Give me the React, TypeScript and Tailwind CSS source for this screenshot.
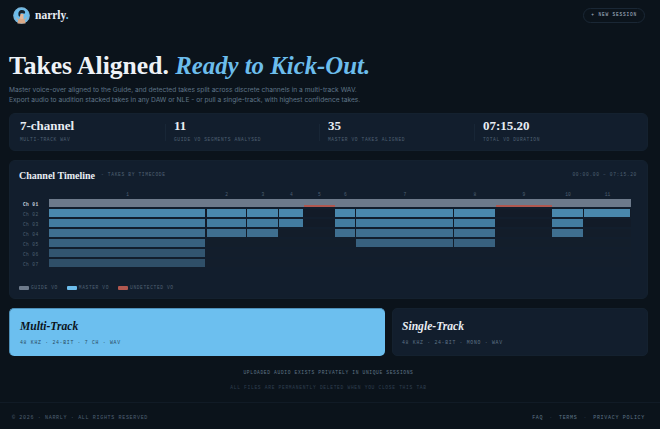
const serif = "font-['Liberation_Serif',serif]"
const mono = "font-['Liberation_Mono',monospace]"

const stats = [
  { value: '7-channel', label: 'MULTI-TRACK WAV' },
  { value: '11', label: 'GUIDE VO SEGMENTS ANALYSED' },
  { value: '35', label: 'MASTER VO TAKES ALIGNED' },
  { value: '07:15.20', label: 'TOTAL VO DURATION' },
]

// segment index 0-10, segments 4 and 8 are the undetected ones
const tracks = [
  { name: 'Ch 02', color: 'bg-[#4a88ad]', row: 'bg-[#121b28]', segs: [0, 1, 2, 3, 5, 6, 7, 9, 10] },
  { name: 'Ch 03', color: 'bg-[#437ca0]', row: 'bg-[#121b28]', segs: [0, 1, 2, 3, 5, 6, 7, 9] },
  { name: 'Ch 04', color: 'bg-[#3f6f90]', row: 'bg-[#131d2a]', segs: [0, 1, 2, 5, 6, 7, 9] },
  { name: 'Ch 05', color: 'bg-[#38617f]', row: 'bg-[#131e2b]', segs: [0, 6, 7] },
  { name: 'Ch 06', color: 'bg-[#325570]', row: 'bg-[#131e2c]', segs: [0] },
  { name: 'Ch 07', color: 'bg-[#2f4f68]', row: 'bg-[#131e2c]', segs: [0] },
]

const cols = 'grid grid-cols-[157.5px_40.5px_32px_25px_31px_21px_98px_42px_56px_32px_1fr]'
const numbers = ['1', '2', '3', '4', '5', '6', '7', '8', '9', '10', '11']

function Logo() {
  return (
    <svg width="17" height="17" viewBox="0 0 34 34" className="shrink-0">
      <circle cx="17" cy="17" r="16.5" fill="#6cbdec" />
      <circle cx="17" cy="17" r="15.5" fill="none" stroke="#8fa3b5" strokeWidth="1" />
      <path d="M9 33c0-7 3-11 8-11s8 4 8 11z" fill="#d9a988" />
      <path d="M14 14h7v9c-1 2-5 2-7 0z" fill="#e3b596" />
      <path d="M11 16c-1-6 2-10 7-10s7 3 6 7l-3 0c-2-1-5-1-6 0l-1 6c-2 0-3-1-3-3z" fill="#14202c" />
      <path d="M7 21l4 6M27 21l-4 6" stroke="#d9a988" strokeWidth="2" />
    </svg>
  )
}

function LegendItem({ color, label }: { color: string; label: string }) {
  return (
    <div className="flex items-center gap-[2px]">
      <div className={`w-[10px] h-[4px] rounded-[1px] ${color}`} />
      <span className={`${mono} text-[4.6px] tracking-[0.13em] text-[#4f6073]`}>{label}</span>
    </div>
  )
}

export default function App() {
  return (
    <div className="w-[660px] h-[429px] overflow-hidden bg-[#0b131b] text-white flex flex-col font-['Inter',sans-serif]">
      <header className="h-[31px] pl-[13px] pr-[15px] flex items-center justify-between shrink-0">
        <div className="flex items-center gap-[5px]">
          <Logo />
          <span className={`${serif} font-bold text-[11.5px] text-[#e8edf3]`}>
            narrly<span className="text-[#6cc0f0]">.</span>
          </span>
        </div>
        <button className={`${mono} h-[15px] px-[7px] rounded-full border border-[#1a2735] text-[4.5px] tracking-[0.18em] text-[#aebccb]`}>
          + NEW SESSION
        </button>
      </header>

      <main className="pl-[9px] pr-[12px] flex flex-col">
        <h1 className={`${serif} font-bold mt-[17px] text-[25.6px] leading-[36px] text-[#eef2f7]`}>
          Takes Aligned. <em className="text-[24.8px] text-[#6cbdec]">Ready to Kick-Out.</em>
        </h1>
        <p className="text-[6.65px] leading-[10px] text-[#5f7387] mt-[1px]">
          Master voice-over aligned to the Guide, and detected takes split across discrete channels in a multi-track WAV.
          <br />
          Export audio to audition stacked takes in any DAW or NLE - or pull a single-track, with highest confidence takes.
        </p>

        <section className="mt-[8px] h-[38px] pb-[3px] rounded-[6px] bg-[#121e2d] border border-[#14212f] grid grid-cols-[154px_154px_155px_1fr] pl-[10px] items-center">
          {stats.map((s, i) => (
            <div key={s.label} className={`flex items-center ${i === 0 ? '' : '-ml-[9px]'}`}>
              {i > 0 && <div className="w-px h-[17px] mt-[3px] bg-[#182636] mr-[8px]" />}
              <div>
                <div className={`${serif} font-bold text-[13px] leading-[14px] text-[#e8edf3]`}>{s.value}</div>
                <div className={`${mono} text-[4.6px] leading-[6px] mt-[4px] tracking-[0.13em] text-[#4f6073]`}>{s.label}</div>
              </div>
            </div>
          ))}
        </section>

        <section className="mt-[9px] h-[139px] rounded-[6px] bg-[#121e2d] border border-[#14212f] flex flex-col pl-[9px] pr-[16px]">
          <div className="flex items-center justify-between h-[29px] -mr-[6px]">
            <div className="flex items-center gap-[6px]">
              <span className={`${serif} font-bold text-[10px] text-[#e8edf3]`}>Channel Timeline</span>
              <span className={`${mono} text-[4.6px] tracking-[0.14em] text-[#4f6073]`}>- TAKES BY TIMECODE</span>
            </div>
            <span className={`${mono} text-[4.6px] tracking-[0.14em] text-[#4f6073]`}>00:00.00 – 07:15.20</span>
          </div>

          <div className="flex">
            <div className="w-[30px] shrink-0 pt-[7px] flex flex-col">
              <div className={`${mono} h-[10px] leading-[10px] text-[4.6px] font-bold tracking-[0.08em] text-[#c9d3de] pl-[4px] mt-[3px]`}>Ch 01</div>
              {tracks.map((t) => (
                <div key={t.name} className={`${mono} h-[10.1px] leading-[10px] text-[4.6px] tracking-[0.08em] text-[#4f6073] pl-[4px]`}>{t.name}</div>
              ))}
            </div>
            <div className="flex-1 flex flex-col">
              <div className={cols}>
                {numbers.map((n) => (
                  <span key={n} className={`${mono} text-center text-[4.6px] leading-[9px] text-[#4f6073]`}>{n}</span>
                ))}
              </div>
              <div className={`${cols} h-[8px] bg-[#6d7a8b] mb-[2px]`}>
                {numbers.map((n, i) => (
                  <div key={n} className="flex items-end">
                    {(i === 4 || i === 8) && <div className="w-full h-[2px] bg-[#b0574f]" />}
                  </div>
                ))}
              </div>
              {tracks.map((t) => (
                <div key={t.name} className={`${cols} h-[8px] mb-[2.1px] ${t.row}`}>
                  {numbers.map((n, i) => (
                    <div key={n} className="pr-[1.5px]">
                      {t.segs.includes(i) && <div className={`h-full ${t.color}`} />}
                    </div>
                  ))}
                </div>
              ))}
            </div>
          </div>

          <div className="flex items-center gap-[9px] mt-[14px]">
            <LegendItem color="bg-[#6d7a8b]" label="GUIDE VO" />
            <LegendItem color="bg-[#6cbdec]" label="MASTER VO" />
            <LegendItem color="bg-[#b0574f]" label="UNDETECTED VO" />
          </div>
        </section>

        <section className="mt-[9px] h-[48px] flex gap-[7px]">
          <div className="w-[376px] rounded-[5px] bg-[#6cbfef] border-l border-t border-[#4d8fb8] pl-[10px] pt-[11px]">
            <div className={`${serif} font-bold italic text-[11.6px] leading-[14px] text-[#0b131b]`}>Multi-Track</div>
            <div className={`${mono} text-[4.8px] leading-[6px] mt-[6px] tracking-[0.15em] text-[#2a4a62]`}>48 KHZ · 24-BIT · 7 CH · WAV</div>
          </div>
          <div className="flex-1 rounded-[5px] bg-[#121e2d] border border-[#14212f] pl-[9px] pt-[11px]">
            <div className={`${serif} font-bold italic text-[11.6px] leading-[14px] text-[#e8edf3]`}>Single-Track</div>
            <div className={`${mono} text-[4.8px] leading-[6px] mt-[6px] tracking-[0.15em] text-[#5f7387]`}>48 KHZ · 24-BIT · MONO · WAV</div>
          </div>
        </section>

        <div className={`${mono} mt-[14px] text-center text-[4.6px] leading-[6px] tracking-[0.14em] text-[#5f7387]`}>UPLOADED AUDIO EXISTS PRIVATELY IN UNIQUE SESSIONS</div>
        <div className={`${mono} mt-[9px] text-center text-[4.6px] leading-[6px] tracking-[0.15em] text-[#2f3f50]`}>ALL FILES ARE PERMANENTLY DELETED WHEN YOU CLOSE THIS TAB</div>
      </main>

      <footer className="mt-[11px] pt-[6px] flex-1 border-t border-[#111b26] pl-[12px] pr-[15px] flex items-center justify-between">
        <span className={`${mono} text-[5px] tracking-[0.135em] text-[#4f6073]`}>© 2026 · NARRLY · ALL RIGHTS RESERVED</span>
        <div className={`${mono} flex gap-[6px] text-[5px] tracking-[0.14em] text-[#5f7387]`}>
          <span>FAQ</span>
          <span className="text-[#2f3f50]">·</span>
          <span>TERMS</span>
          <span className="text-[#2f3f50]">·</span>
          <span>PRIVACY POLICY</span>
        </div>
      </footer>
    </div>
  )
}
